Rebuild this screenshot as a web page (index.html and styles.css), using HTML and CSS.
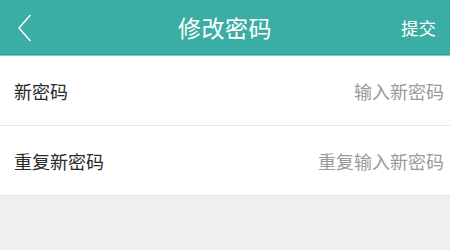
FILE: index.html
```html
<!DOCTYPE html>
<html lang="zh-CN">
<head>
<meta charset="utf-8">
<title>修改密码</title>
<link rel="stylesheet" href="styles.css">
</head>
<body>
<div class="page">
  <header class="topbar">
    <div class="back">
      <svg width="16" height="28" viewBox="0 0 16 28" aria-hidden="true">
        <polyline points="13,1.5 2,14 13,26.5" fill="none" stroke="#ffffff" stroke-width="1.5" stroke-linecap="round" stroke-linejoin="round"/>
      </svg>
    </div>
    <div class="title">修改密码</div>
    <div class="submit">提交</div>
  </header>
  <div class="form">
    <div class="row">
      <span class="label">新密码</span>
      <span class="placeholder">输入新密码</span>
    </div>
    <div class="row">
      <span class="label">重复新密码</span>
      <span class="placeholder">重复输入新密码</span>
    </div>
  </div>
</div>
</body>
</html>
```

FILE: styles.css
```css
html, body {
  margin: 0;
  padding: 0;
}
body {
  width: 450px;
  height: 250px;
  background: #efefef;
  font-family: "Noto Sans CJK SC", "Noto Sans", sans-serif;
  overflow: hidden;
}
.page {
  display: flex;
  flex-direction: column;
}
.topbar {
  height: 54px;
  background: #3aaea4;
  border-bottom: 1px solid #2f9c92;
  box-shadow: 0 1px 0 #7ccbc4;
  display: grid;
  grid-template-columns: 1fr auto 1fr;
  align-items: center;
  color: #ffffff;
  position: relative;
  z-index: 1;
}
.back {
  padding-left: 17px;
  display: flex;
  align-items: center;
  height: 100%;
  padding-top: 1px;
}
.title {
  font-size: 23px;
  line-height: 30px;
  letter-spacing: 0.5px;
  margin-top: -1px;
}
.submit {
  justify-self: end;
  padding-right: 14px;
  font-size: 17.5px;
  line-height: 24px;
  margin-top: 2px;
}
.form {
  background: #ffffff;
  margin-top: 1px;
}
.row {
  height: 69px;
  display: flex;
  align-items: center;
  justify-content: space-between;
  padding: 0 6px 0 14px;
  border-bottom: 1px solid #e6e6e6;
  font-size: 18px;
}
.label {
  color: #2a2a2a;
}
.placeholder {
  color: #9a9a9a;
}
```
